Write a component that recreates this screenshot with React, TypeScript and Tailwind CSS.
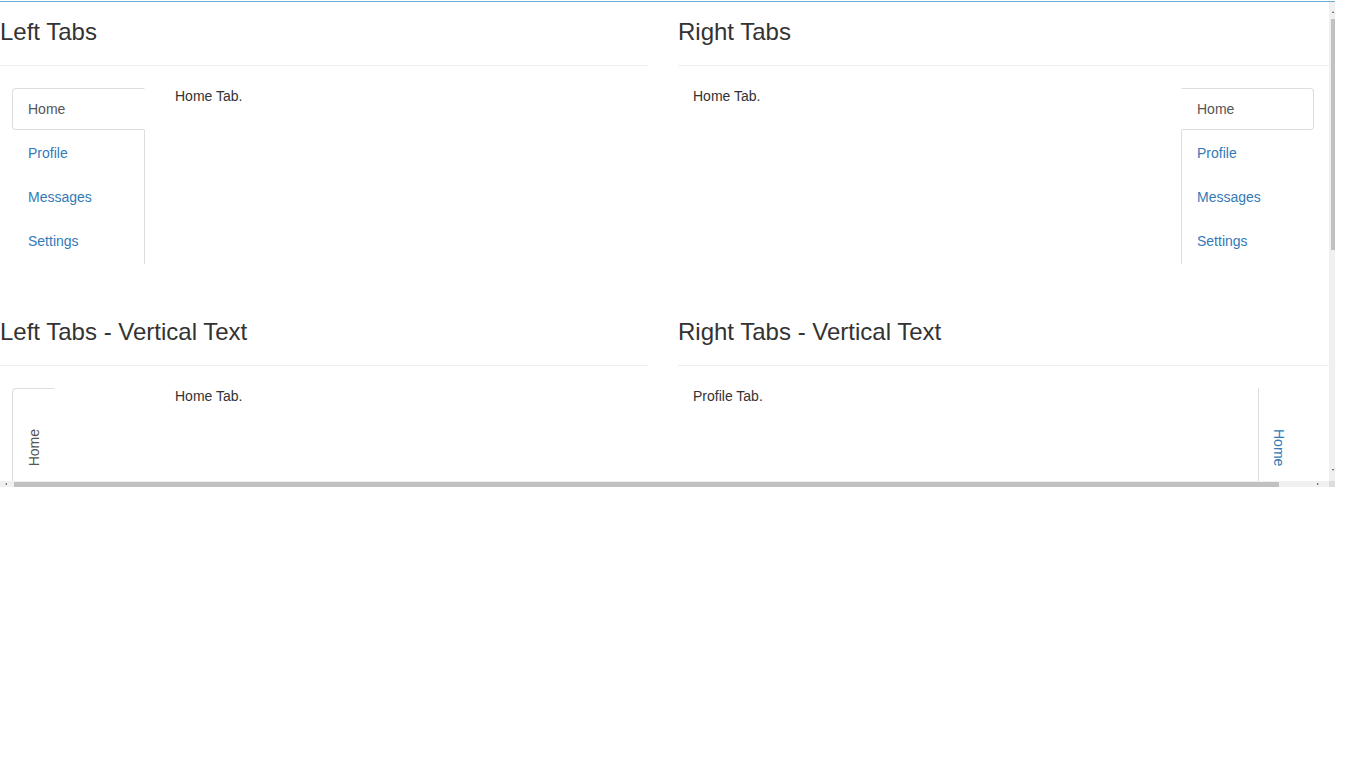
const font = { fontFamily: '"Liberation Sans", Arial, Helvetica, sans-serif' }

type Tab = { label: string; active?: boolean }

const TABS: Tab[] = [
  { label: 'Home', active: true },
  { label: 'Profile' },
  { label: 'Messages' },
  { label: 'Settings' },
]

function Heading({ children }: { children: string }) {
  return (
    <>
      <h3 className="h-[26px] text-[24px] leading-[26px] font-normal text-[#333]">{children}</h3>
      <hr className="mt-[20px] border-t border-[#eee]" />
    </>
  )
}

function LeftTabs() {
  return (
    <ul className="ml-[12px] mt-[2px] flex w-[133px] flex-col gap-[2px] border-r border-[#ddd]">
      {TABS.map((t) => (
        <li
          key={t.label}
          className={
            t.active
              ? '-mr-px h-[42px] rounded-l-[4px] border border-[#ddd] border-r-transparent bg-white px-[15px] py-[10px] text-[14px] leading-5 text-[#555]'
              : 'h-[42px] border border-transparent px-[15px] py-[10px] text-[14px] leading-5 text-[#337ab7]'
          }
        >
          {t.label}
        </li>
      ))}
    </ul>
  )
}

function RightTabs() {
  return (
    <ul className="mr-[15px] mt-[2px] flex w-[133px] flex-col gap-[2px] border-l border-[#ddd]">
      {TABS.map((t) => (
        <li
          key={t.label}
          className={
            t.active
              ? '-ml-px h-[42px] rounded-r-[4px] border border-[#ddd] border-l-transparent bg-white px-[15px] py-[10px] text-[14px] leading-5 text-[#555]'
              : '-ml-px h-[42px] border border-transparent px-[15px] py-[10px] text-[14px] leading-5 text-[#337ab7]'
          }
        >
          {t.label}
        </li>
      ))}
    </ul>
  )
}

export default function App() {
  return (
    <div className="min-h-screen bg-white text-[14px] text-[#333]" style={font}>
      <div className="w-[1335px] pt-px">
        <div className="border-t border-[#6aaad6]" />

        {/* ── Frame body + vertical scrollbar ───────────────────────────── */}
        <div className="flex h-[479px]">
          <div className="w-[1329px] overflow-hidden">
            <div className="flex w-[1329px] flex-col gap-y-[38px]">
              {/* Row 1 */}
              <div className="flex">
                <section className="w-[648px] shrink-0 pt-[17px]">
                  <Heading>Left Tabs</Heading>
                  <div className="mt-[20px] flex h-[178px]">
                    <LeftTabs />
                    <div className="ml-[30px] leading-5">Home Tab.</div>
                  </div>
                </section>
                <section className="ml-[30px] w-[651px] shrink-0 pt-[17px]">
                  <Heading>Right Tabs</Heading>
                  <div className="mt-[20px] flex h-[178px]">
                    <div className="flex-1 pl-[15px] leading-5">Home Tab.</div>
                    <RightTabs />
                  </div>
                </section>
              </div>

              {/* Row 2 */}
              <div className="flex">
                <section className="w-[648px] shrink-0 pt-[17px]">
                  <Heading>Left Tabs - Vertical Text</Heading>
                  <div className="mt-[20px] flex h-[200px]">
                    <ul className="ml-[12px] mt-[2px] flex w-[43px] flex-col border-r border-[#ddd]">
                      <li className="-mr-px flex h-[110px] justify-center rounded-tl-[4px] rounded-bl-[4px] border border-[#ddd] border-r-transparent bg-white pt-[40px] text-[#555]">
                        <span className="h-fit rotate-180 leading-5 [writing-mode:vertical-rl]">Home</span>
                      </li>
                    </ul>
                    <div className="ml-[120px] leading-5">Home Tab.</div>
                  </div>
                </section>
                <section className="ml-[30px] w-[651px] shrink-0 pt-[17px]">
                  <Heading>Right Tabs - Vertical Text</Heading>
                  <div className="mt-[20px] flex h-[200px]">
                    <div className="flex-1 pl-[15px] leading-5">Profile Tab.</div>
                    <ul className="mr-[15px] mt-[2px] flex w-[56px] flex-col border-l border-[#ddd]">
                      <li className="-ml-px flex h-[110px] w-[42px] justify-center border border-transparent pt-[40px] text-[#337ab7]">
                        <span className="h-fit leading-5 [writing-mode:vertical-rl]">Home</span>
                      </li>
                    </ul>
                  </div>
                </section>
              </div>
            </div>
          </div>

          {/* vertical scrollbar */}
          <div className="flex w-[6px] flex-col bg-[#f0f0f0]">
            <div className="ml-[3px] mt-[9px] h-0 w-0 border-x-[1.5px] border-b-[2px] border-x-transparent border-b-[#505050]" />
            <div className="ml-[2px] mt-[6px] h-[231px] w-[4px] bg-[#c1c1c1]" />
            <div className="flex-1" />
            <div className="mb-[10px] ml-[3px] h-0 w-0 border-x-[1.5px] border-t-[2px] border-x-transparent border-t-[#505050]" />
          </div>
        </div>

        {/* ── Horizontal scrollbar ─────────────────────────────────────── */}
        <div className="flex h-[6px]">
          <div className="flex w-[1329px] items-center bg-[#f0f0f0]">
            <div className="ml-[5px] h-0 w-0 border-y-[1.5px] border-r-[2px] border-y-transparent border-r-[#505050]" />
            <div className="ml-[7px] h-[5px] w-[1265px] self-end bg-[#c1c1c1]" />
            <div className="ml-[38px] h-0 w-0 border-y-[1.5px] border-l-[2px] border-y-transparent border-l-[#505050]" />
          </div>
          <div className="w-[6px] bg-[#dcdcdc]" />
        </div>
      </div>
    </div>
  )
}
